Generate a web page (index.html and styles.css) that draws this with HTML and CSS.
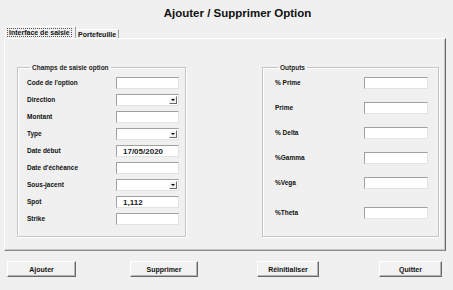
FILE: index.html
```html
<!DOCTYPE html>
<html lang="fr">

<head>
    <title>Ajouter / Supprimer Option</title>
    <link rel="stylesheet" href="styles.css">
</head>

<body>
    <div class="window">
        <p class="title">Ajouter / Supprimer Option</p>

        <div class="tabs">
            <div class="tab tab-active"><span class="tab-focus">Interface de saisie</span></div>
            <div class="tab">Portefeuille</div>
        </div>

        <div class="tab-panel">
            <fieldset class="group group-left">
                <legend>Champs de saisie option</legend>
                <div class="field-row"><span class="label">Code de l'option</span><span class="input"></span></div>
                <div class="field-row"><span class="label">Direction</span><span class="input combo"><span class="combo-btn"></span></span></div>
                <div class="field-row"><span class="label">Montant</span><span class="input"></span></div>
                <div class="field-row"><span class="label">Type</span><span class="input combo"><span class="combo-btn"></span></span></div>
                <div class="field-row"><span class="label">Date début</span><span class="input value">17/05/2020</span></div>
                <div class="field-row"><span class="label">Date d'échéance</span><span class="input"></span></div>
                <div class="field-row"><span class="label">Sous-jacent</span><span class="input combo"><span class="combo-btn"></span></span></div>
                <div class="field-row"><span class="label">Spot</span><span class="input value">1,112</span></div>
                <div class="field-row"><span class="label">Strike</span><span class="input"></span></div>
            </fieldset>

            <fieldset class="group group-right">
                <legend>Outputs</legend>
                <div class="out-row"><span class="label">% Prime</span><span class="input"></span></div>
                <div class="out-row"><span class="label">Prime</span><span class="input"></span></div>
                <div class="out-row"><span class="label">% Delta</span><span class="input"></span></div>
                <div class="out-row"><span class="label">%Gamma</span><span class="input"></span></div>
                <div class="out-row"><span class="label">%Vega</span><span class="input"></span></div>
                <div class="out-row out-last"><span class="label">%Theta</span><span class="input"></span></div>
            </fieldset>
        </div>

        <div class="buttons">
            <button class="btn btn-add">Ajouter</button>
            <button class="btn btn-delete">Supprimer</button>
            <button class="btn btn-reset">Réinitialiser</button>
            <button class="btn btn-quit">Quitter</button>
        </div>
    </div>
</body>

</html>
```

FILE: styles.css
```css
/* Whole window */
body {
    margin: 0;
    background-color: #f0f0f0;
    font-family: "Liberation Sans", Arial, sans-serif;
    color: #111111;
}

.window {
    width: 453px;
    height: 290px;
    display: flex;
    flex-direction: column;
}

.title {
    margin: 0;
    height: 26px;
    line-height: 26px;
    padding-left: 22px;
    text-align: center;
    font-size: 11.5px;
    font-weight: bold;
}

/* Tabs */
.tabs {
    display: flex;
    align-items: flex-end;
    height: 12px;
    margin-left: 5px;
}

.tab {
    height: 9px;
    padding: 0 2px;
    font-size: 7px;
    font-weight: bold;
    line-height: 9px;
    border-top: 1px solid #ffffff;
    border-right: 1px solid #a0a0a0;
    box-sizing: border-box;
}

.tab-active {
    height: 12px;
    width: 71px;
    padding-top: 1px;
    border-left: 1px solid #ffffff;
}

.tab-focus {
    outline: 1px dotted #555555;
    padding: 0 1px;
}

.tab-panel {
    height: 213px;
    margin: 0 7px 0 4px;
    box-sizing: border-box;
    border-top: 1px solid #ffffff;
    border-left: 1px solid #ffffff;
    border-right: 1px solid #696969;
    border-bottom: 1px solid #8a8a8a;
    box-shadow: inset -1px -1px 0 #c8c8c8;
    display: flex;
    justify-content: space-between;
    padding: 25px 6px 14px 12px;
}

/* Group boxes */
.group {
    margin: 0;
    border: 1px solid #c4c4c4;
    box-shadow: 1px 1px 0 #ffffff, inset 1px 1px 0 #ffffff;
    box-sizing: border-box;
    height: 173px;
    display: flex;
    flex-direction: column;
}

.group legend {
    font-size: 6.5px;
    font-weight: bold;
    padding: 0 2px;
    margin-left: 3px;
    color: #222222;
}

.group-left {
    width: 169px;
    padding: 6px 6px 0 9px;
    gap: 5px;
}

.group-right {
    width: 177px;
    padding: 6px 10px 0 12px;
    gap: 13px;
}

.field-row,
.out-row {
    display: flex;
    justify-content: space-between;
    align-items: center;
    height: 12px;
}

.out-last {
    margin-top: 5px;
}

.label {
    font-size: 6.5px;
    font-weight: bold;
    margin-top: -2px;
}

.input {
    width: 63px;
    height: 12px;
    box-sizing: border-box;
    background-color: #ffffff;
    border-top: 1px solid #a0a0a0;
    border-left: 1px solid #a0a0a0;
    border-right: 1px solid #e3e3e3;
    border-bottom: 1px solid #e3e3e3;
    display: flex;
    align-items: center;
    justify-content: flex-end;
}

.out-row .input {
    width: 64px;
}

.value {
    justify-content: flex-start;
    padding-left: 6px;
    font-size: 8px;
    font-weight: bold;
    color: #1a1a1a;
}

.combo-btn {
    width: 8px;
    height: 8px;
    margin-right: 1px;
    background-color: #f0f0f0;
    border-top: 1px solid #ffffff;
    border-left: 1px solid #ffffff;
    border-right: 1px solid #696969;
    border-bottom: 1px solid #696969;
    box-sizing: border-box;
    position: relative;
}

.combo-btn::after {
    content: "";
    position: absolute;
    left: 1px;
    top: 2px;
    border-left: 2px solid transparent;
    border-right: 2px solid transparent;
    border-top: 2px solid #000000;
}

/* Bottom buttons */
.buttons {
    display: flex;
    padding: 10px 0 0 7px;
}

.btn {
    width: 69px;
    height: 16px;
    padding: 0;
    background-color: #f2f2f2;
    border-top: 1px solid #ffffff;
    border-left: 1px solid #ffffff;
    border-right: 1px solid #696969;
    border-bottom: 1px solid #696969;
    box-shadow: inset -1px -1px 0 #b4b4b4;
    font-family: "Liberation Sans", Arial, sans-serif;
    font-size: 7px;
    font-weight: bold;
    color: #111111;
}

.btn-delete {
    width: 68px;
    margin-left: 54px;
}

.btn-reset {
    width: 62px;
    margin-left: 59px;
}

.btn-quit {
    width: 63px;
    margin-left: 60px;
}
```
